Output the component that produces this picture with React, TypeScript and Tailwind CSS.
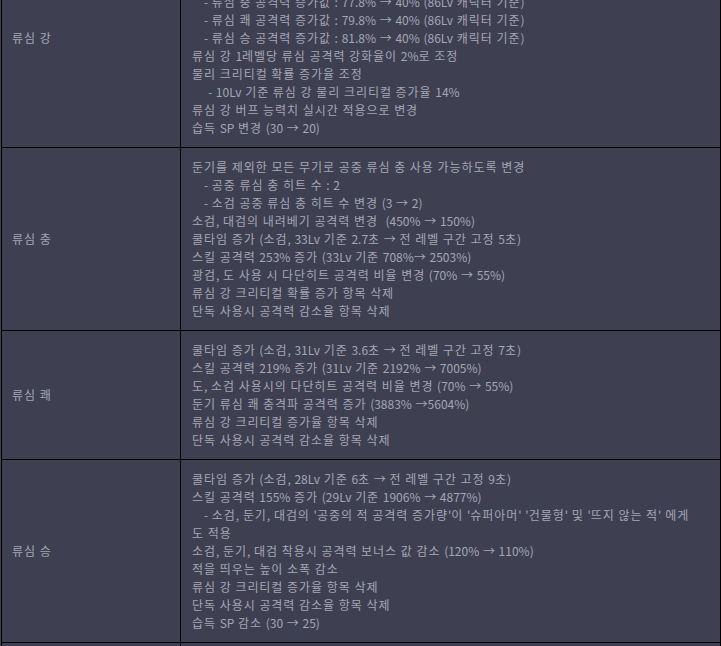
import React from "react";

type Line = { t: string; indent?: 0 | 1 | 2 };
type Row = { label: string; lines: Line[] };

const rows: Row[] = [
  {
    label: "류심 강",
    lines: [
      { t: "류심 강 버프 효과 변경" },
      { t: "류심 스킬 공격력 증가값 변경" },
      { t: "- 류심 강 공격력 증가값 : 75.2% → 40% (86Lv 캐릭터 기준)", indent: 1 },
      { t: "- 류심 충 공격력 증가값 : 77.8% → 40% (86Lv 캐릭터 기준)", indent: 1 },
      { t: "- 류심 쾌 공격력 증가값 : 79.8% → 40% (86Lv 캐릭터 기준)", indent: 1 },
      { t: "- 류심 승 공격력 증가값 : 81.8% → 40% (86Lv 캐릭터 기준)", indent: 1 },
      { t: "류심 강 1레벨당 류심 공격력 강화율이 2%로 조정" },
      { t: "물리 크리티컬 확률 증가율 조정" },
      { t: "- 10Lv 기준 류심 강 물리 크리티컬 증가율 14%", indent: 2 },
      { t: "류심 강 버프 능력치 실시간 적용으로 변경" },
      { t: "습득 SP 변경 (30 → 20)" },
    ],
  },
  {
    label: "류심 충",
    lines: [
      { t: "둔기를 제외한 모든 무기로 공중 류심 충 사용 가능하도록 변경" },
      { t: "- 공중 류심 충 히트 수 : 2", indent: 1 },
      { t: "- 소검 공중 류심 충 히트 수 변경 (3 → 2)", indent: 1 },
      { t: "소검, 대검의 내려베기 공격력 변경  (450% → 150%)" },
      { t: "쿨타임 증가 (소검, 33Lv 기준 2.7초 → 전 레벨 구간 고정 5초)" },
      { t: "스킬 공격력 253% 증가 (33Lv 기준 708%→ 2503%)" },
      { t: "광검, 도 사용 시 다단히트 공격력 비율 변경 (70% → 55%)" },
      { t: "류심 강 크리티컬 확률 증가 항목 삭제" },
      { t: "단독 사용시 공격력 감소율 항목 삭제" },
    ],
  },
  {
    label: "류심 쾌",
    lines: [
      { t: "쿨타임 증가 (소검, 31Lv 기준 3.6초 → 전 레벨 구간 고정 7초)" },
      { t: "스킬 공격력 219% 증가 (31Lv 기준 2192% → 7005%)" },
      { t: "도, 소검 사용시의 다단히트 공격력 비율 변경 (70% → 55%)" },
      { t: "둔기 류심 쾌 충격파 공격력 증가 (3883% →5604%)" },
      { t: "류심 강 크리티컬 증가율 항목 삭제" },
      { t: "단독 사용시 공격력 감소율 항목 삭제" },
    ],
  },
  {
    label: "류심 승",
    lines: [
      { t: "쿨타임 증가 (소검, 28Lv 기준 6초 → 전 레벨 구간 고정 9초)" },
      { t: "스킬 공격력 155% 증가 (29Lv 기준 1906% → 4877%)" },
      {
        t: "- 소검, 둔기, 대검의 '공중의 적 공격력 증가량'이 '슈퍼아머' '건물형' 및 '뜨지 않는 적' 에게",
        indent: 1,
      },
      { t: "도 적용" },
      { t: "소검, 둔기, 대검 착용시 공격력 보너스 값 감소 (120% → 110%)" },
      { t: "적을 띄우는 높이 소폭 감소" },
      { t: "류심 강 크리티컬 증가율 항목 삭제" },
      { t: "단독 사용시 공격력 감소율 항목 삭제" },
      { t: "습득 SP 감소 (30 → 25)" },
    ],
  },
  {
    label: "류심 연",
    lines: [
      { t: "스킬 공격력 증가" },
      { t: "류심 강 크리티컬 증가율 항목 삭제" },
    ],
  },
];

function Txt({ t }: { t: string }) {
  const parts = t.split(/([\uAC00-\uD7A3]+)/);
  return (
    <>
      {parts.map((p, i) =>
        /[\uAC00-\uD7A3]/.test(p) ? (
          <span key={i} className="tracking-[0.95px]">
            {p}
          </span>
        ) : (
          <span key={i}>{p}</span>
        )
      )}
    </>
  );
}

export default function App() {
  return (
    <div
      className="w-[721px] h-[646px] overflow-hidden bg-[#3e4052] text-[12px] leading-[18px] text-[#a4a6b4]"
      style={{ fontFamily: '"Noto Sans CJK KR", "Noto Sans", sans-serif' }}
    >
      <div className="ml-px mt-[-72px] w-[720px] border border-black bg-[#3e4052]">
        {rows.map((row, i) => (
          <div
            key={i}
            className={`flex ${i < rows.length - 1 ? "border-b border-black" : ""}`}
          >
            <div className="w-[179px] shrink-0 border-r border-black flex items-center pl-[10px]">
              <span className="[word-spacing:1px] whitespace-pre">
                <Txt t={row.label} />
              </span>
            </div>
            <div className="flex-1 pl-[11px] pr-[8px] py-[10px] [word-spacing:1px]">
              {row.lines.map((l, j) => (
                <div
                  key={j}
                  className={`whitespace-pre h-[18px] ${
                    l.indent === 1 ? "pl-[12px]" : l.indent === 2 ? "pl-[16px]" : ""
                  }`}
                >
                  <Txt t={l.t} />
                </div>
              ))}
            </div>
          </div>
        ))}
      </div>
    </div>
  );
}
